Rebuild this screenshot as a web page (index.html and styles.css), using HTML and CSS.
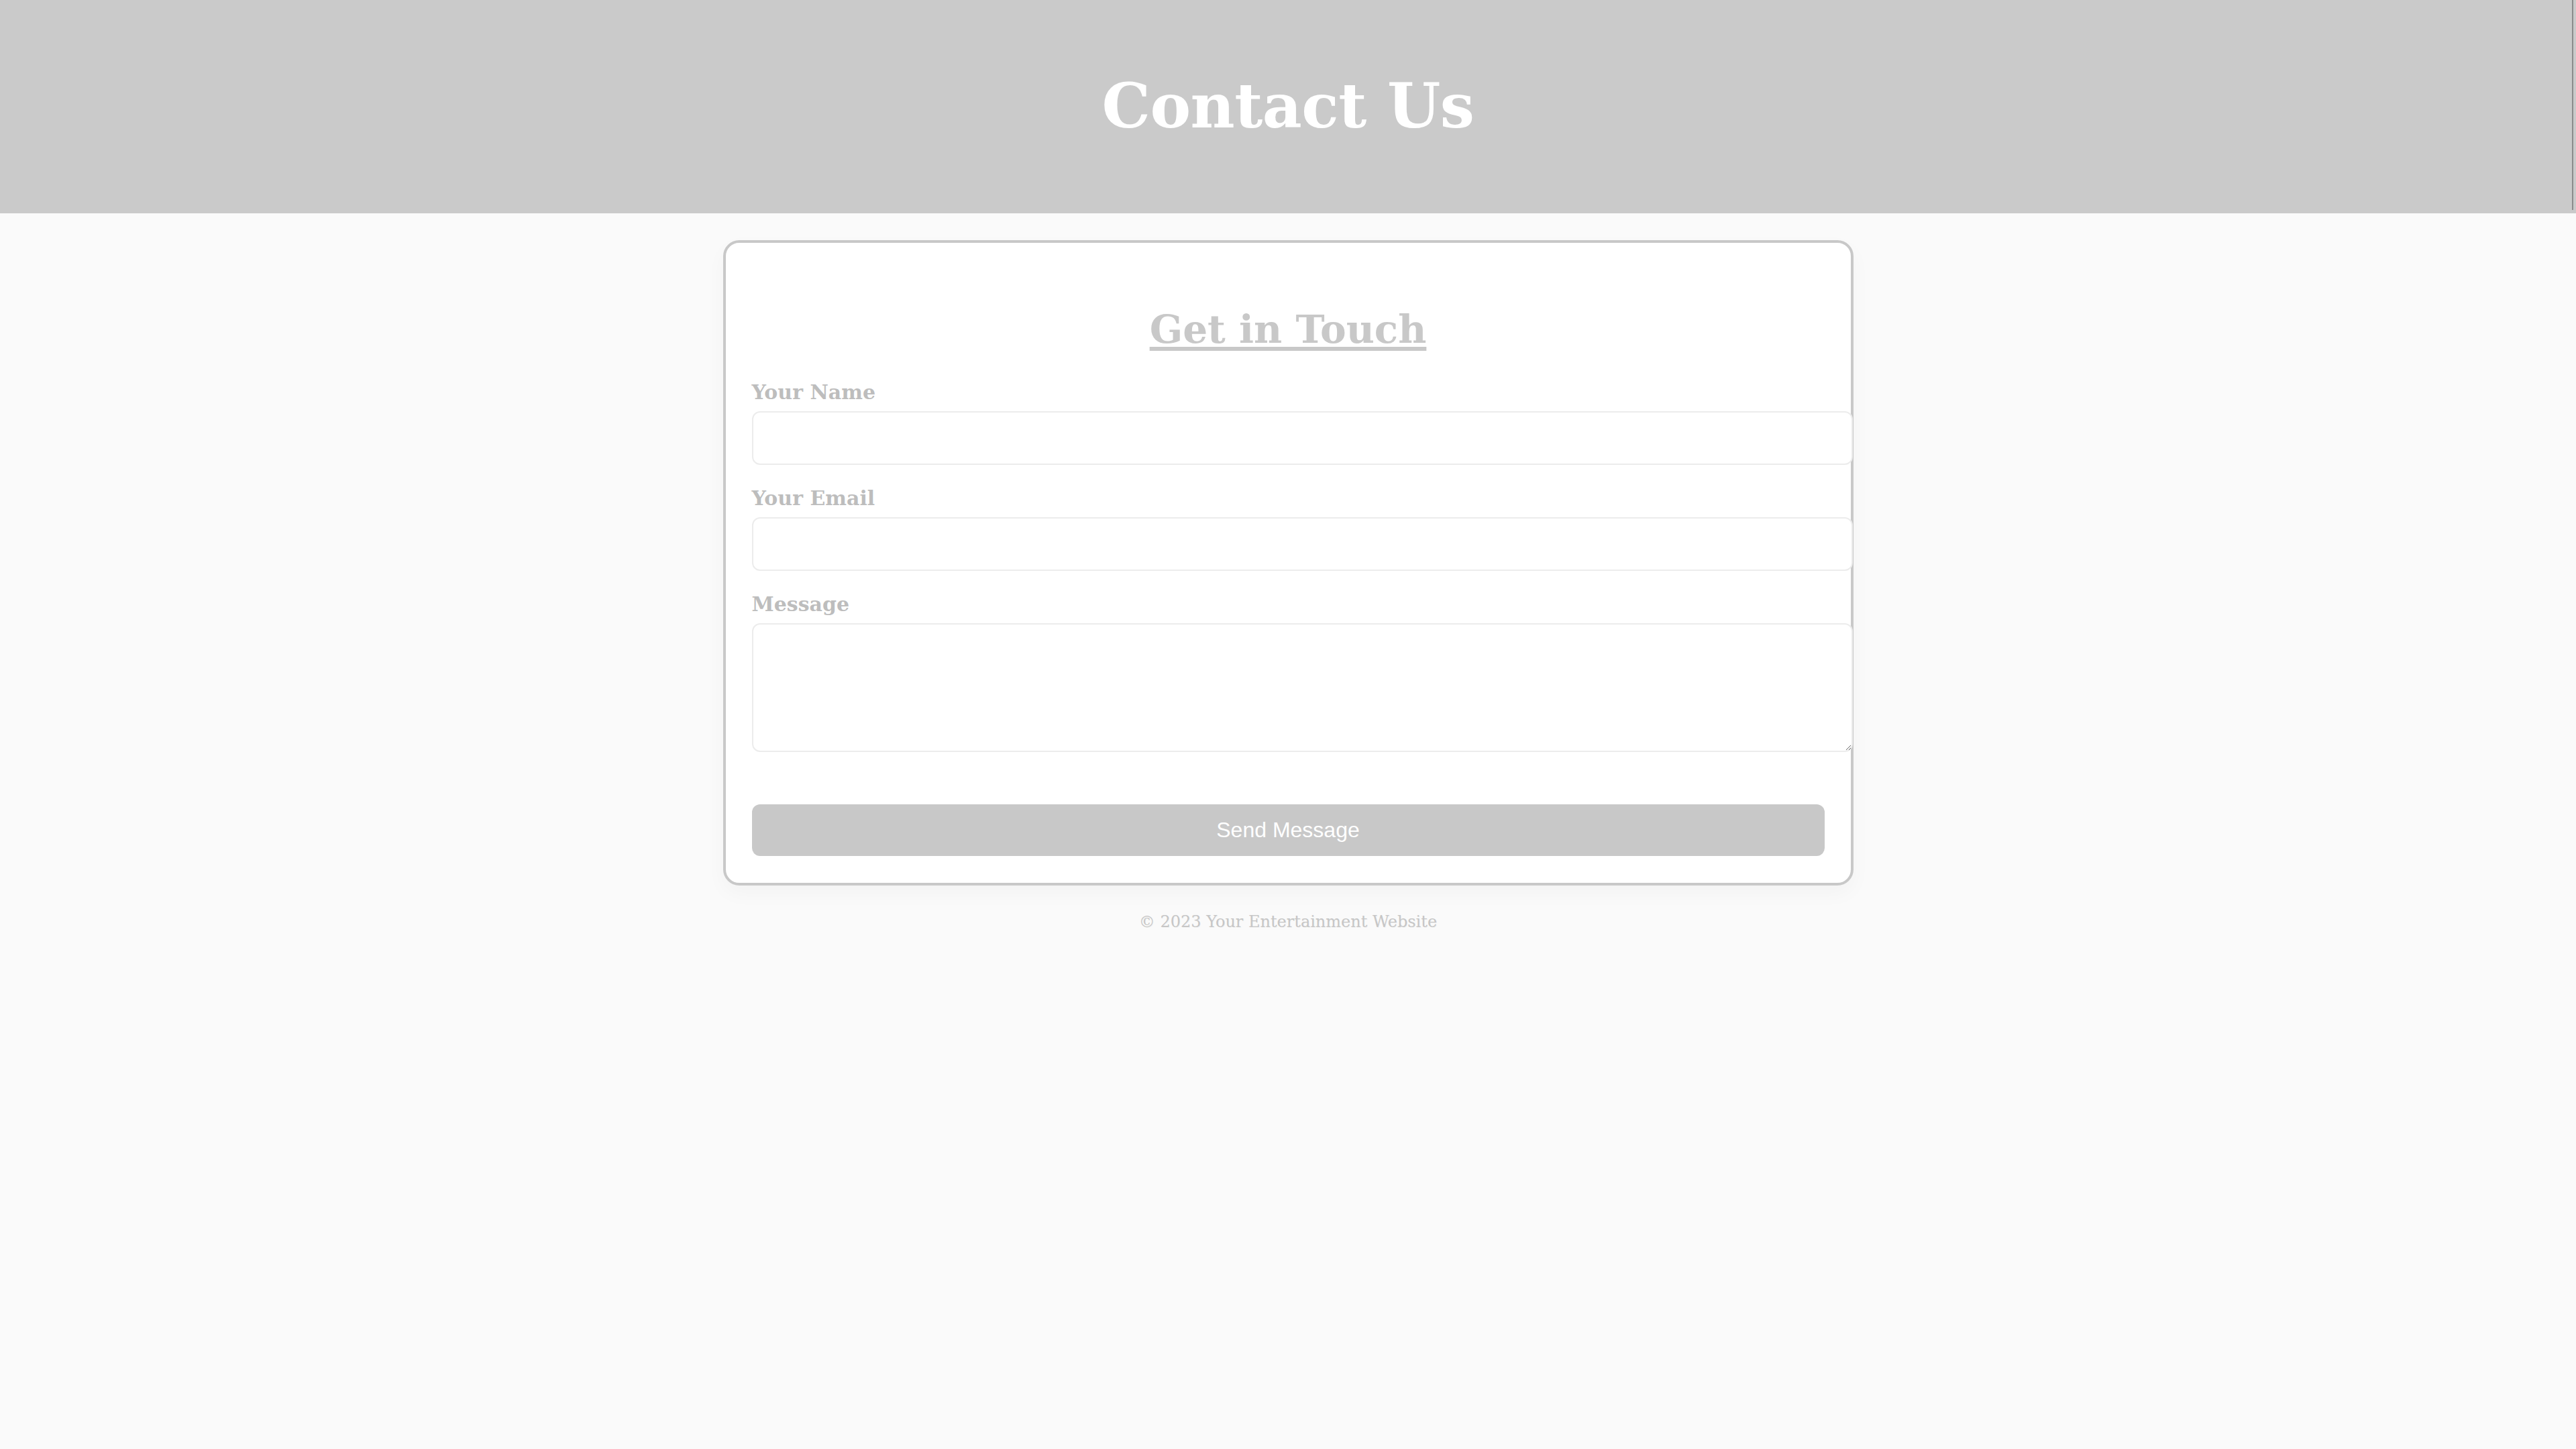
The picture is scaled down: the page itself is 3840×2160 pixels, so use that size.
FILE: index.html
```html
<!DOCTYPE html>
<html lang="en">
<head>
<meta charset="utf-8">
<title>Contact Us</title>
<link rel="stylesheet" href="styles.css">
</head>
<body>
<header class="site-header">
  <h1 class="site-title">Contact Us</h1>
</header>
<main class="page">
  <section class="card">
    <h2 class="card-title">Get in Touch</h2>
    <form class="form">
      <div class="field">
        <label class="field-label" for="name">Your Name</label>
        <input class="field-input" id="name" type="text">
      </div>
      <div class="field">
        <label class="field-label" for="email">Your Email</label>
        <input class="field-input" id="email" type="email">
      </div>
      <div class="field field-last">
        <label class="field-label" for="message">Message</label>
        <textarea class="field-input field-area" id="message"></textarea>
      </div>
      <button class="send-btn" type="button">Send Message</button>
    </form>
  </section>
  <footer class="site-footer">© 2023 Your Entertainment Website</footer>
</main>
</body>
</html>
```

FILE: styles.css
```css
html, body {
  margin: 0;
  padding: 0;
}
body {
  background: #fafafa;
  font-family: "DejaVu Serif", "Liberation Serif", serif;
  min-height: 2160px;
}
.site-header {
  position: relative;
  height: 318px;
  background: #cacaca;
  display: flex;
  align-items: center;
  justify-content: center;
}
.site-header::after {
  content: "";
  position: absolute;
  right: 4px;
  top: 0;
  height: 313px;
  width: 2px;
  background: #8c8c8c;
}
.site-title {
  margin: 0;
  color: #ffffff;
  font-family: "DejaVu Serif", serif;
  font-weight: bold;
  font-size: 91px;
  line-height: 1.2;
  letter-spacing: -0.5px;
}
.page {
  display: flex;
  flex-direction: column;
  align-items: center;
  padding-top: 40px;
}
.card {
  box-sizing: border-box;
  width: 1685px;
  background: #ffffff;
  border: 4px solid #c8c8c8;
  border-radius: 24px;
  padding: 0 39px 40px;
  box-shadow: 0 12px 30px rgba(0, 0, 0, 0.03);
}
.card-title {
  margin: 94px 0 40px;
  text-align: center;
  color: #c8c8c8;
  font-family: "DejaVu Serif", serif;
  font-weight: bold;
  font-size: 58px;
  line-height: 71px;
  text-decoration: underline;
  text-decoration-thickness: 6px;
  text-underline-offset: 6px;
}
.form {
  display: flex;
  flex-direction: column;
}
.field {
  display: flex;
  flex-direction: column;
  gap: 10px;
  margin-bottom: 32px;
}
.field-last {
  margin-bottom: 78px;
}
.field-label {
  color: #bdbdbd;
  font-family: "DejaVu Serif", serif;
  font-weight: bold;
  font-size: 30px;
  line-height: 36px;
}
.field-input {
  box-sizing: content-box;
  width: 100%;
  height: 38px;
  padding: 19px;
  margin: 0;
  border: 2px solid #ececec;
  border-radius: 12px;
  background: #ffffff;
  font-family: "Liberation Sans", sans-serif;
  font-size: 32px;
  outline: none;
}
.field-area {
  height: 150px;
  display: block;
  resize: vertical;
}
.send-btn {
  height: 77px;
  width: 100%;
  border: none;
  border-radius: 12px;
  background: #c8c8c8;
  color: #ffffff;
  font-family: "Liberation Sans", Arial, sans-serif;
  font-size: 32px;
  padding: 0;
}
.site-footer {
  margin-top: 39px;
  color: #c6c6c6;
  font-family: "DejaVu Serif", serif;
  font-size: 24px;
  line-height: 30px;
  text-shadow: 1px 1px 0 rgba(0, 0, 0, 0.05);
}
```
